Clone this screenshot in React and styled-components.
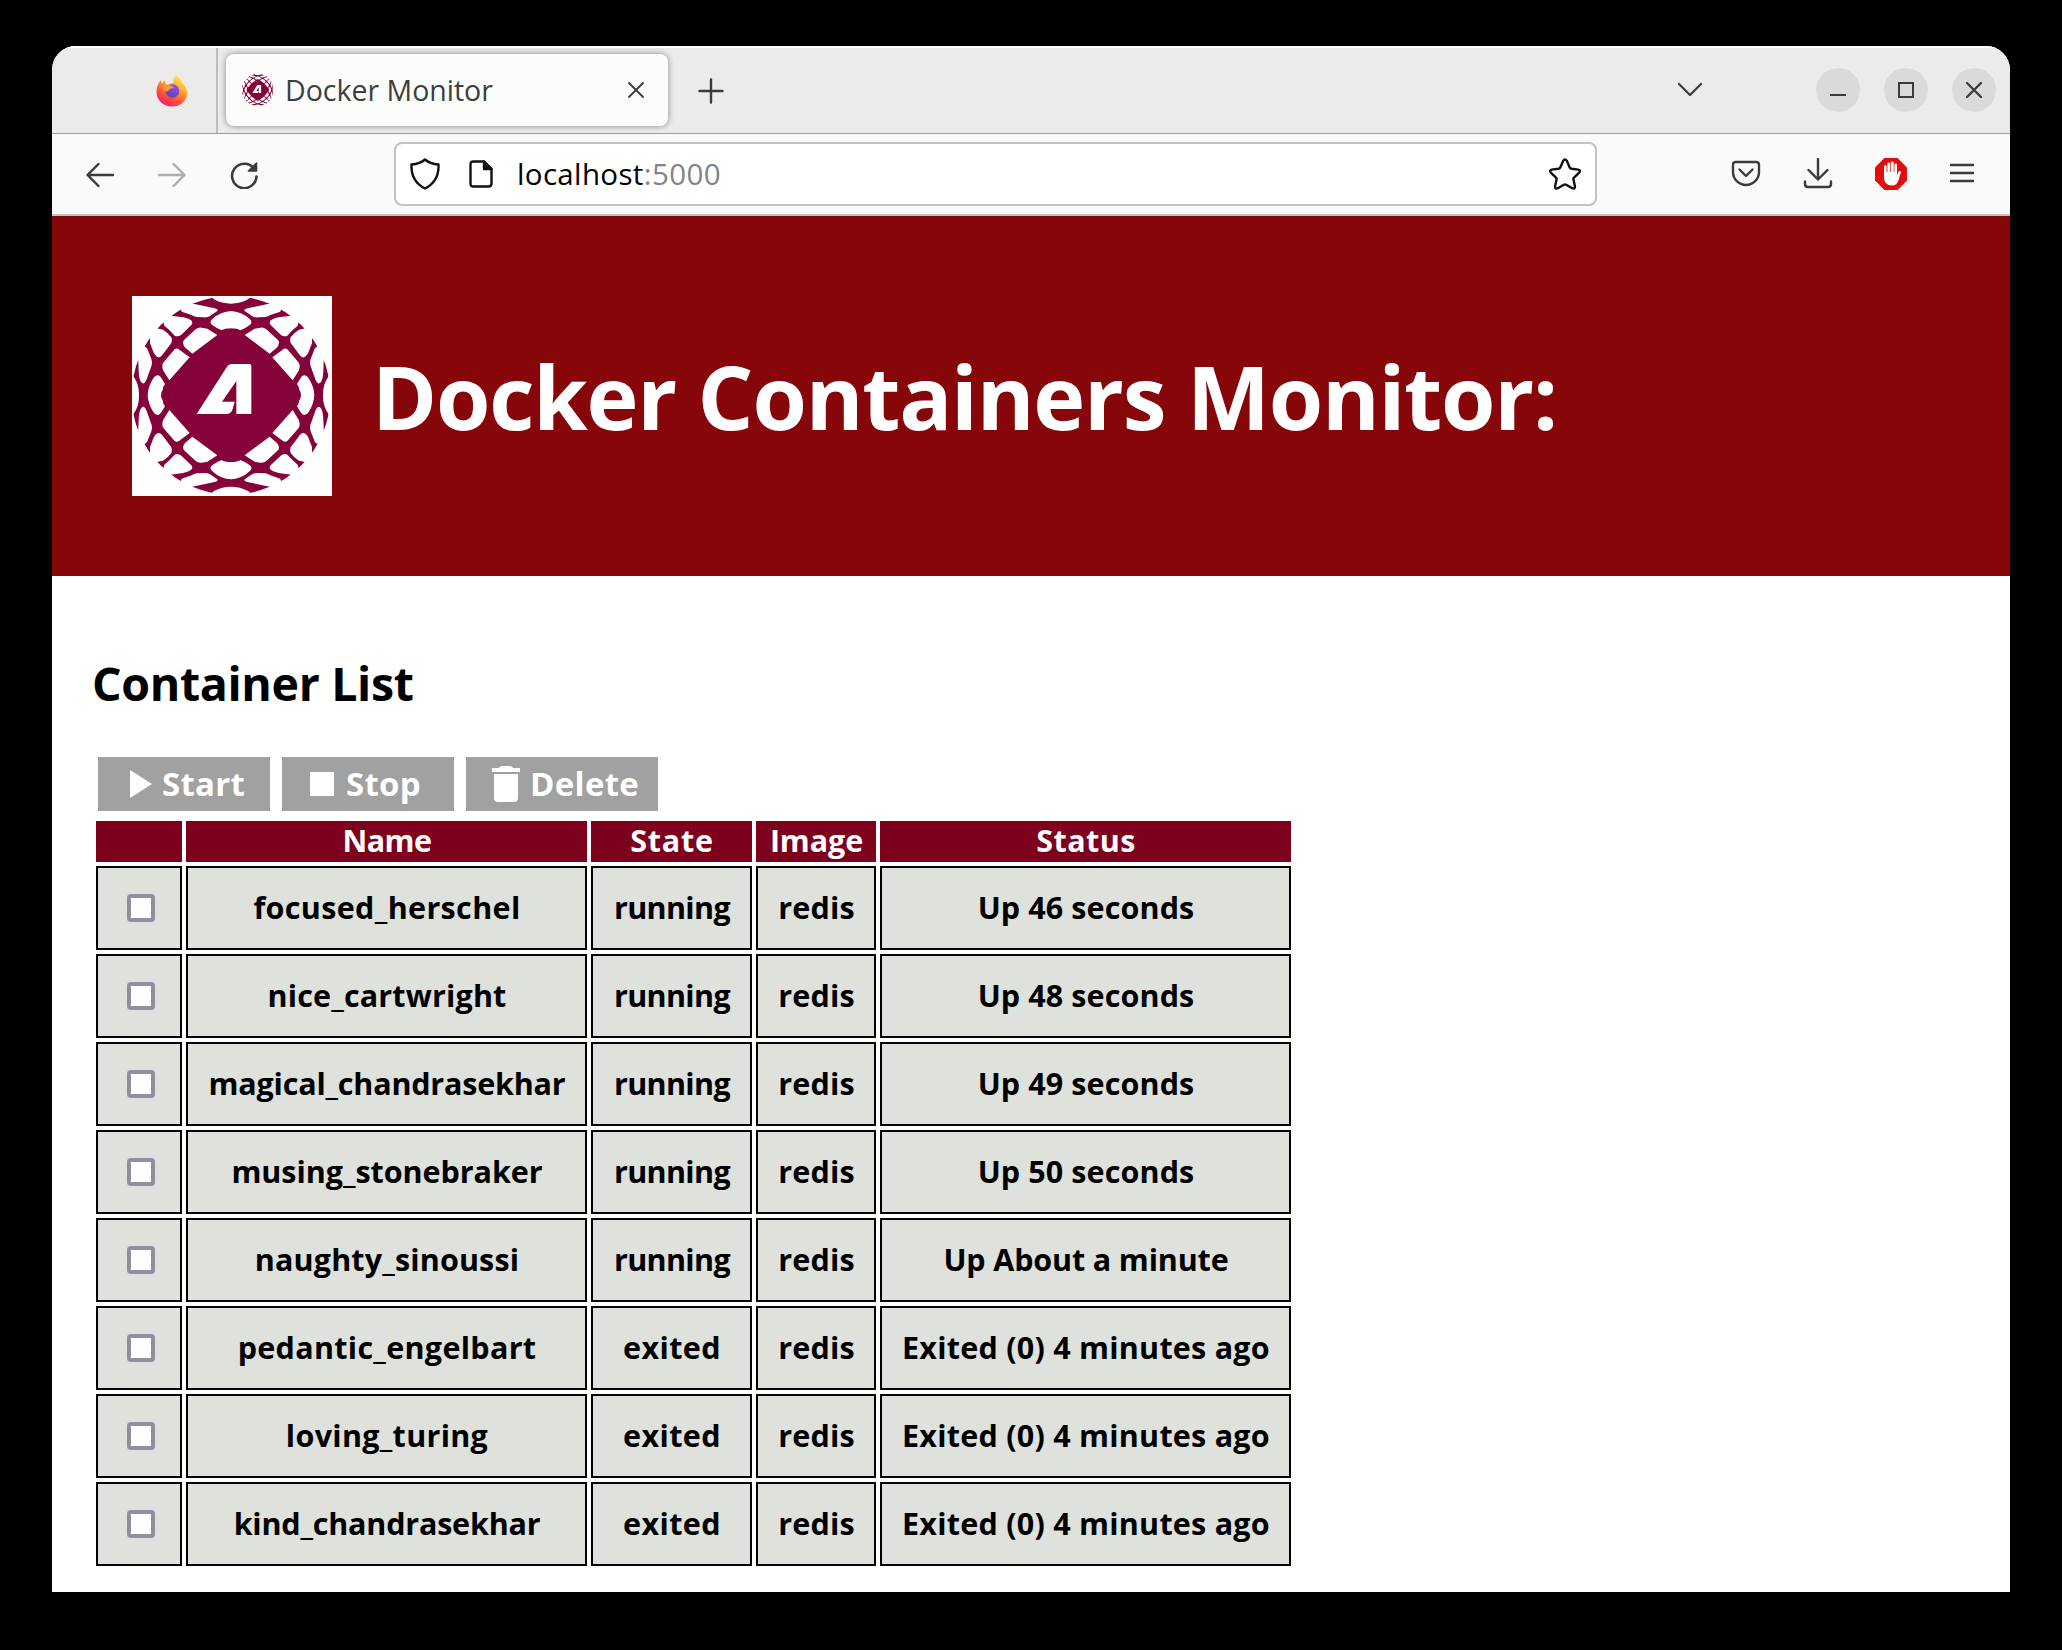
import React from 'react';
import styled, { createGlobalStyle } from 'styled-components';

const GlobalStyle = createGlobalStyle`
  * { box-sizing: border-box; }
  body { margin: 0; background: #000; }
`;

const Desktop = styled.div`
  width: 2062px;
  height: 1650px;
  padding: 46px 52px 58px;
  background: #000;
  font-family: 'Open Sans', 'Noto Sans', sans-serif;
`;

const Window = styled.div`
  display: flex;
  flex-direction: column;
  height: 1546px;
  overflow: hidden;
  border-radius: 24px 24px 0 0;
  background: #fff;
`;

const TabStrip = styled.header`
  display: flex;
  align-items: center;
  height: 88px;
  background: #ebebeb;
  border-top: 2px solid #fff;
  border-bottom: 1px solid #9a9a9a;
  flex: none;
`;

const PinnedArea = styled.div`
  display: flex;
  align-items: center;
  width: 166px;
  height: 100%;
  padding-left: 104px;
  border-right: 2px solid #bdbdbd;
`;

const Tab = styled.div`
  display: flex;
  align-items: center;
  width: 442px;
  height: 72px;
  margin: 0 0 1px 8px;
  padding: 0 24px 0 16px;
  border-radius: 8px;
  background: #fcfcfa;
  box-shadow: 0 0 6px rgba(0, 0, 0, 0.42);
`;

const TabTitle = styled.span`
  flex: 1;
  margin-left: 11px;
  color: #3c3f40;
  font-size: 28.5px;
  line-height: 40px;
  white-space: nowrap;
`;

const Controls = styled.div`
  display: flex;
  align-items: center;
  margin-left: auto;
  padding: 0 14px 1px 0;
  gap: 24px;
`;

const Spacer = styled.div`
  width: ${(p) => p.$w}px;
  flex: none;
`;

const RoundButton = styled.div`
  display: flex;
  align-items: center;
  justify-content: center;
  width: 44px;
  height: 44px;
  border-radius: 50%;
  background: #dadada;
`;

const Toolbar = styled.div`
  display: flex;
  align-items: center;
  height: 82px;
  padding: 0 35px 0 34px;
  background: #fafafa;
  border-bottom: 2px solid #c2c2c2;
  flex: none;
`;

const NavIcons = styled.div`
  display: flex;
  align-items: center;
  gap: 44px;
  width: 308px;
  padding-top: 2px;
`;

const UrlBar = styled.div`
  display: flex;
  align-items: center;
  width: 1203px;
  height: 64px;
  padding: 0 14px 0 14px;
  border: 2px solid #c2c2c4;
  border-radius: 8px;
  background: #fff;
`;

const Address = styled.span`
  flex: 1;
  margin-left: 24px;
  color: #000;
  font-size: 29.5px;
  line-height: 42px;
  letter-spacing: 0.35px;
`;

const Port = styled.span`
  color: #808585;
  letter-spacing: 0.4px;
`;

const ToolIcons = styled.div`
  display: flex;
  align-items: center;
  gap: 42px;
  margin-left: auto;
`;

const Banner = styled.div`
  display: flex;
  align-items: center;
  gap: 40px;
  height: 360px;
  padding-left: 80px;
  background: #870609;
  flex: none;
`;

const LogoFrame = styled.div`
  display: flex;
  width: 200px;
  height: 200px;
  background: #fff;
`;

const Title = styled.h1`
  margin: 0;
  color: #fff;
  font-size: 88px;
  line-height: 120px;
  font-weight: 700;
  letter-spacing: -1.24px;
  white-space: nowrap;
`;

const Content = styled.main`
  padding: 77px 0 0 40px;
`;

const Heading = styled.h2`
  margin: 0 0 44px;
  color: #000;
  font-size: 46.5px;
  line-height: 60px;
  font-weight: 700;
  letter-spacing: -0.35px;
`;

const Actions = styled.div`
  display: flex;
  gap: 12px;
  padding-left: 6px;
  margin-bottom: 6px;
`;

const ActionButton = styled.button`
  display: flex;
  align-items: center;
  gap: ${(p) => p.$gap}px;
  width: ${(p) => p.$width}px;
  height: 54px;
  margin: 0;
  padding: 0 0 1px ${(p) => p.$pad}px;
  border: 0;
  background: #a1a1a1;
  color: #fff;
  font: 700 33px/50px 'Open Sans', 'Noto Sans', sans-serif;
  letter-spacing: 0.3px;
`;

const Table = styled.table`
  width: 1203px;
  table-layout: fixed;
  border-collapse: separate;
  border-spacing: 4px;
  font-size: 30.5px;
  line-height: 38px;
  font-weight: 700;
  text-align: center;
  white-space: nowrap;
`;

const Col = styled.col`
  width: ${(p) => p.$w}px;
`;

const HeadCell = styled.th`
  height: 41px;
  padding: 0 0 3px 1px;
  background: #7d001d;
  color: #fff;
  letter-spacing: ${(p) => p.$track || 0}px;
`;

const Cell = styled.td`
  height: 84px;
  padding: 0 0 2px 1px;
  border: 2px solid #000;
  background: #dfe2dc;
  color: #000;
  letter-spacing: ${(p) => p.$track || 0}px;
`;

const Checkbox = styled.input.attrs({ type: 'checkbox' })`
  appearance: none;
  display: block;
  width: 28px;
  height: 28px;
  margin: 1px auto 0 28px;
  border: 4px solid #8f8f9d;
  border-radius: 4px;
  background: #fff;
`;

const Svg = styled.svg`
  display: block;
  flex: none;
  width: ${(p) => p.$w}px;
  height: ${(p) => p.$h}px;
  fill: none;
  stroke: ${(p) => p.$c || '#3b3b3b'};
  stroke-width: ${(p) => p.$s || 2.4};
  stroke-linecap: round;
  stroke-linejoin: round;
`;

const Icon = ({ w, h, c, s, children }) => (
  <Svg viewBox={`0 0 ${w} ${h}`} $w={w} $h={h} $c={c} $s={s}>{children}</Svg>
);

const LATTICE = [
  'M160 150Q157 144 162 138L197 106Q205 99 215 101L232 104L262 123L187 179L166 161Q160 156 160 150Z',
  'M97 215Q97 208 102 203L134 166Q141 161 148 167L179 190L118 259L100 230Q96 222 97 215Z',
  'M304 51Q272 52 247 75Q238 83 244 91Q249 96 262 103L275 109Q282 103 304 103Z',
  'M53 304Q54 278 70 253Q76 243 84 244Q90 245 94 252L105 270Q99 277 98 288Q93 293 93 304Z',
  'M176 -5L183 28L250 42Q267 46 262 51L240 66Q232 71 222 70L200 69Q192 68 185 63L155 53L152 43L130 20Z',
  'M110 50L122 65L160 70Q180 75 186 82Q189 88 184 93L154 122Q144 130 134 125L118 108L103 95L100 83L80 66Z',
  'M60 88L80 103L99 107Q115 117 124 130Q128 138 124 147L97 183Q88 195 79 187Q72 182 66 163L60 148L60 125L40 125Z',
  'M30 135L40 155L51 162L64 195Q68 206 65 214L50 256Q42 275 34 265Q27 257 26 230L24 183L6 180Z',
  'M220 -5L245 10L252 16Q275 29 304 29V-5Z',
  'M-5 210L8 240L11 248Q28 272 27 304H-5Z',
];

const Quadrant = () => LATTICE.map((d) => <path key={d} d={d} fill="#fff" />);

const Monogram = ({ size }) => (
  <svg width={size} height={size} viewBox="0 0 200 200">
    <g transform="scale(.33333) translate(-6 -6)">
      <circle cx="303" cy="304" r="298" fill="#86023b" />
      <Quadrant />
      <g transform="translate(606 0) scale(-1 1)"><Quadrant /></g>
      <g transform="translate(0 607) scale(1 -1)"><Quadrant /></g>
      <g transform="translate(606 607) scale(-1 -1)"><Quadrant /></g>
      <path
        d="M200 360L291 218Q296 210 305 210H358Q364 210 364 216V360H319V261L276 323H314L309 342Q305 360 288 360Z"
        fill="#fff"
      />
    </g>
  </svg>
);

const Firefox = () => (
  <svg width="32" height="32" viewBox="0 0 32 32">
    <defs>
      <linearGradient id="ffBody" x1=".8" y1="0" x2=".25" y2="1">
        <stop offset="0" stopColor="#fff44f" />
        <stop offset=".35" stopColor="#ffb02e" />
        <stop offset=".65" stopColor="#ff5a36" />
        <stop offset="1" stopColor="#f0166e" />
      </linearGradient>
      <linearGradient id="ffGlobe" x1=".7" y1="0" x2=".3" y2="1">
        <stop offset="0" stopColor="#9a4bf0" />
        <stop offset="1" stopColor="#5a46b8" />
      </linearGradient>
    </defs>
    <path d="M20 0Q25 4 26 8Q31.500 13 31.500 19C30 27 24 31.500 16 31.500C7 31.500 .5 25 .5 17Q.5 10 5 5L6 9Q7 7 9 5Q9 9 11 10Q14 8 17 8Q17 3 20 0Z" fill="url(#ffBody)" />
    <circle cx="16.500" cy="16" r="6.800" fill="url(#ffGlobe)" />
    <path d="M8 11Q12 9 16 11L18 13Q14 13 12 16Q9 17 7 15Z" fill="#ff9a2b" />
  </svg>
);

const BlockerIcon = () => (
  <svg width="32" height="32" viewBox="0 0 32 32">
    <path d="M9.400 0H22.600L32 9.400V22.600L22.600 32H9.400L0 22.600V9.400Z" fill="#e40d0d" />
    <path
      d="M9 17V8.500a1.300 1.300 0 0 1 2.600 0V14h.8V5.800a1.400 1.400 0 0 1 2.800 0V14h.7V5a1.400 1.400 0 0 1 2.800 0V14h.7V6.800a1.300 1.300 0 0 1 2.600 0V17.500l1.200-3.300q.8-1.700 2.200-1.100q.8.400.4 1.500L23.600 22q-1.500 5.500-6.800 5.500Q9 27.500 9 19Z"
      fill="#fff"
    />
  </svg>
);

const HEADERS = [['', 0], ['Name', -0.6], ['State', 0.75], ['Image', -0.1], ['Status', 0.45]];

const CONTAINERS = [
  ['focused_herschel', 0.35, 'running', 'Up 46 seconds', 0.1],
  ['nice_cartwright', 0.16, 'running', 'Up 48 seconds', 0.1],
  ['magical_chandrasekhar', -0.2, 'running', 'Up 49 seconds', 0.1],
  ['musing_stonebraker', -0.05, 'running', 'Up 50 seconds', 0.1],
  ['naughty_sinoussi', 0.15, 'running', 'Up About a minute', -0.15],
  ['pedantic_engelbart', 0.3, 'exited', 'Exited (0) 4 minutes ago', 0.24],
  ['loving_turing', 0.3, 'exited', 'Exited (0) 4 minutes ago', 0.24],
  ['kind_chandrasekhar', -0.2, 'exited', 'Exited (0) 4 minutes ago', 0.24],
];

export default function App() {
  return (
    <Desktop>
      <GlobalStyle />
      <Window>
        <TabStrip>
          <PinnedArea><Firefox /></PinnedArea>
          <Tab>
            <Monogram size={32} />
            <TabTitle>Docker Monitor</TabTitle>
            <Icon w={16} h={16} s={1.8}><path d="M1 1L15 15M15 1L1 15" /></Icon>
          </Tab>
          <Spacer $w={30} />
          <Icon w={26} h={26} s={2.4}><path d="M13 1.500V24.500M1.500 13H24.500" /></Icon>
          <Controls>
            <Icon w={26} h={16} s={2.2}><path d="M2 2L13 13L24 2" /></Icon>
            <Spacer $w={65} />
            <RoundButton>
              <Icon w={16} h={16} s={2}><path d="M0 13H16" strokeLinecap="butt" /></Icon>
            </RoundButton>
            <RoundButton>
              <Icon w={16} h={16} s={2}><path d="M1 1H15V15H1Z" strokeLinejoin="miter" /></Icon>
            </RoundButton>
            <RoundButton>
              <Icon w={16} h={16} s={2.4}><path d="M1 1L15 15M15 1L1 15" /></Icon>
            </RoundButton>
          </Controls>
        </TabStrip>

        <Toolbar>
          <NavIcons>
            <Icon w={28} h={26}><path d="M27 13H2M12.500 2L1.500 13L12.500 24" /></Icon>
            <Icon w={28} h={26} c="#adadad"><path d="M1 13H26M15.500 2L26.500 13L15.500 24" /></Icon>
            <Icon w={28} h={28} s={2.6}>
              <path d="M24 7.500A12.200 12.200 0 1 0 26.500 15.500" />
              <path d="M26.500 2V10H18.500Z" fill="#3b3b3b" strokeWidth="1.6" />
            </Icon>
          </NavIcons>
          <UrlBar>
            <Icon w={30} h={32} c="#111">
              <path d="M15 1.500C19 5 23 6 28.500 6.500C29 17 26 25 15 30.500C4 25 1 17 1.500 6.500C7 6 11 5 15 1.500Z" />
            </Icon>
            <Spacer $w={29} />
            <Icon w={24} h={28} c="#111">
              <path d="M4.500 1.500H15L22.500 9V23.500Q22.500 26.500 19.500 26.500H4.500Q1.500 26.500 1.500 23.500V4.500Q1.500 1.500 4.500 1.500Z" />
              <path d="M15 1.500V9H22.500Z" fill="#111" />
            </Icon>
            <Address>localhost<Port>:5000</Port></Address>
            <Icon w={32} h={32} c="#111">
              <path d="M14.300 2.600Q16 .3 17.700 2.600L20.700 9.400Q21.300 10.600 22.600 10.800L29.300 11.600Q32 12.300 30.200 14.600L25 19.600Q24.200 20.500 24.500 21.700L26 28.500Q26 31.400 23.200 30.200L17.200 26.700Q16 26 14.800 26.700L8.800 30.200Q6 31.400 6 28.500L7.500 21.700Q7.800 20.500 7 19.600L1.800 14.600Q0 12.300 2.700 11.600L9.400 10.800Q10.700 10.600 11.300 9.400Z" />
            </Icon>
          </UrlBar>
          <ToolIcons>
            <Icon w={30} h={28} s={2.4}>
              <path d="M5 2H25Q28 2 28 5V12A13 13 0 0 1 2 12V5Q2 2 5 2ZM8.500 9.500L15 16L21.500 9.500" />
            </Icon>
            <Icon w={30} h={32} s={2.4}>
              <path d="M15 1V21.500M5.500 12L15 21.500L24.500 12M2 23.500V26Q2 29 5 29H25Q28 29 28 26V23.500" />
            </Icon>
            <BlockerIcon />
            <Icon w={26} h={22} s={2.4}><path d="M2 2H24M2 10H24M2 18H24" /></Icon>
          </ToolIcons>
        </Toolbar>

        <Banner>
          <LogoFrame><Monogram size={200} /></LogoFrame>
          <Title>Docker Containers Monitor:</Title>
        </Banner>

        <Content>
          <Heading>Container List</Heading>
          <Actions>
            <ActionButton $width={172} $pad={32} $gap={10}>
              <svg width="22" height="28" viewBox="0 0 22 28"><path d="M0 0L22 14L0 28Z" fill="#fff" /></svg>
              Start
            </ActionButton>
            <ActionButton $width={172} $pad={28} $gap={12}>
              <svg width="24" height="24" viewBox="0 0 24 24"><path d="M0 0H24V24H0Z" fill="#fff" /></svg>
              Stop
            </ActionButton>
            <ActionButton $width={192} $pad={26} $gap={10}>
              <svg width="28" height="36" viewBox="0 0 28 36">
                <path d="M0 2H7Q8 0 10 0H18Q20 0 21 2H28V6H0ZM2 8H26V32Q26 36 22 36H6Q2 36 2 32Z" fill="#fff" />
              </svg>
              Delete
            </ActionButton>
          </Actions>
          <Table>
            <colgroup>
              <Col $w={86} /><Col $w={401} /><Col $w={161} /><Col $w={120} /><Col $w={411} />
            </colgroup>
            <thead>
              <tr>
                {HEADERS.map(([label, track]) => (
                  <HeadCell key={label} $track={track}>{label}</HeadCell>
                ))}
              </tr>
            </thead>
            <tbody>
              {CONTAINERS.map(([name, nameTrack, state, status, statusTrack]) => (
                <tr key={name}>
                  <Cell><Checkbox aria-label={name} /></Cell>
                  <Cell $track={nameTrack}>{name}</Cell>
                  <Cell $track={state === 'running' ? -0.65 : 0.4}>{state}</Cell>
                  <Cell $track={0.15}>redis</Cell>
                  <Cell $track={statusTrack}>{status}</Cell>
                </tr>
              ))}
            </tbody>
          </Table>
        </Content>
      </Window>
    </Desktop>
  );
}
